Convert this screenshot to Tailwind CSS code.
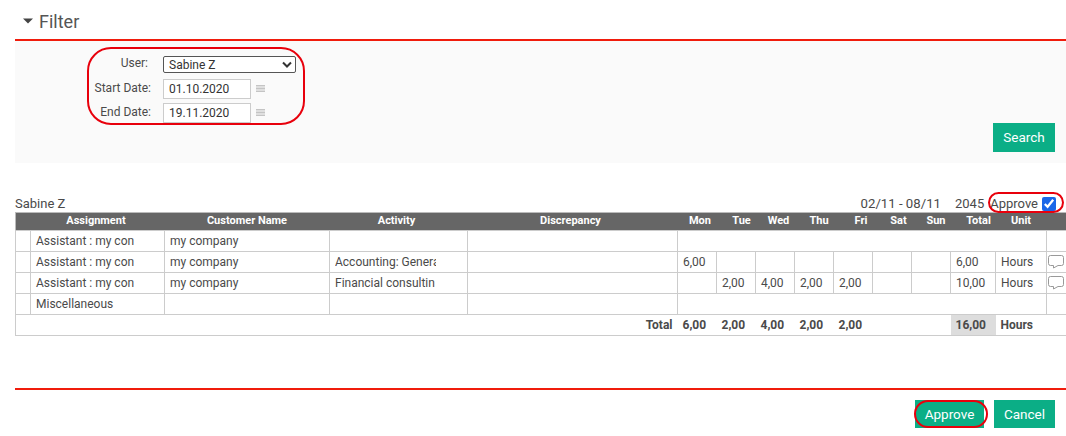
<!DOCTYPE html>
<html>
<head>
<meta charset="utf-8">
<script src="https://cdn.jsdelivr.net/npm/@tailwindcss/browser@4"></script>
</head>
<body class="bg-white font-['Roboto',sans-serif] text-[12px] text-[#4a4a4a] overflow-hidden">
<div class="relative w-[1066px] h-[436px] overflow-hidden">
  <div class="ml-[15px]">
    <div class="h-[41px] border-b-2 border-[#f01c0c] flex items-center gap-[6px] pl-[8px] pt-[3px]">
      <svg width="10" height="6" viewBox="0 0 10 6"><path d="M0 0.5H10L5 5.5Z" fill="#444"/></svg>
      <span class="text-[18px] text-[#555]">Filter</span>
    </div>
    <div class="h-[122px] bg-[#fafafa] flex justify-between items-end pr-[11px] pb-[11px]">
      <div class="self-start pt-[15px] grid grid-cols-[133px_auto] gap-x-[15px] content-start">
        <div class="h-[17px] flex items-center justify-end pb-[3px]">User:</div>
        <div class="w-[133px] h-[17px] border border-[#555] rounded-[2px] bg-white flex items-center justify-between pl-[5px] pr-[3px] text-[#333]">
          <span class="pt-[1px]">Sabine Z</span>
          <svg width="10" height="7" viewBox="0 0 10 7"><path d="M1 1.500L5 5.500L9 1.500" fill="none" stroke="#333" stroke-width="2"/></svg>
        </div>
        <div class="h-[20px] mt-[6px] flex items-center justify-end mr-[-3px] pb-[2px]">Start Date:</div>
        <div class="mt-[6px] flex items-center gap-[5px]">
          <div class="w-[88px] h-[20px] border border-[#ccc] bg-white flex items-center pl-[5px] text-[#333]">01.10.2020</div>
          <svg width="9" height="8" viewBox="0 0 9 8"><path d="M0 .5H9M0 2H9M0 3.500H9M0 5H9M0 6.500H9" stroke="#c4c4c4" stroke-width="1"/></svg>
        </div>
        <div class="h-[20px] mt-[4px] flex items-center justify-end mr-[-3px] pb-[2px]">End Date:</div>
        <div class="mt-[4px] flex items-center gap-[5px]">
          <div class="w-[88px] h-[20px] border border-[#ccc] bg-white flex items-center pl-[5px] text-[#333]">19.11.2020</div>
          <svg width="9" height="8" viewBox="0 0 9 8"><path d="M0 .5H9M0 2H9M0 3.500H9M0 5H9M0 6.500H9" stroke="#c4c4c4" stroke-width="1"/></svg>
        </div>
      </div>
      <button class="w-[62px] h-[29px] bg-[#0bae86] text-white text-[13.5px]">Search</button>
    </div>

    <div class="h-[49px] flex justify-between items-end text-[13px] leading-[18px]">
      <span class="translate-y-[1px]">Sabine Z</span>
      <div class="flex items-center translate-y-[1px]">
        <span class="text-[13.2px]">02/11 - 08/11</span>
        <span class="ml-[14px]">2045</span>
        <span class="ml-[6px]">Approve</span>
        <input type="checkbox" checked class="ml-[4px] mr-[10px] w-[14px] h-[14px] accent-[#1a66e8]">
      </div>
    </div>

    <table class="table-fixed border-collapse w-[1051px]">
      <colgroup>
        <col class="w-[15px]"><col class="w-[134px]"><col class="w-[165px]"><col class="w-[138px]"><col class="w-[210px]">
        <col class="w-[39px]"><col class="w-[39px]"><col class="w-[39px]"><col class="w-[39px]"><col class="w-[39px]"><col class="w-[39px]"><col class="w-[39px]"><col class="w-[45px]"><col class="w-[51px]"><col class="w-[20px]">
      </colgroup>
      <thead>
        <tr class="h-[18px] bg-[#666] text-white text-[11px] font-bold border border-[#bbb]">
          <th></th><th class="pr-[3px]">Assignment</th><th>Customer Name</th><th class="pr-[4px]">Activity</th><th class="pr-[4px]">Discrepancy</th>
          <th class="pl-[6px]">Mon</th><th class="pl-[11px]">Tue</th><th class="pl-[7px]">Wed</th><th class="pl-[10px]">Thu</th><th class="pl-[16px]">Fri</th><th class="pl-[13px]">Sat</th><th class="pl-[10px]">Sun</th><th class="pl-[11px]">Total</th><th>Unit</th><th></th>
        </tr>
      </thead>
      <tbody class="[&_td]:border [&_td]:border-[#ccc] [&_td]:px-[5px] [&_td]:py-0 [&_td]:overflow-hidden [&_td]:whitespace-nowrap">
        <tr class="h-[21px]">
          <td></td><td>Assistant : my con</td><td>my company</td><td></td><td></td><td colspan="9"></td><td></td>
        </tr>
        <tr class="h-[21px]">
          <td></td><td>Assistant : my con</td><td>my company</td><td><div class="w-[101px] overflow-hidden">Accounting: General</div></td><td></td>
          <td>6,00</td><td></td><td></td><td></td><td></td><td></td><td></td><td>6,00</td><td>Hours</td>
          <td class="!p-0"><svg class="ml-[1px]" width="16" height="14" viewBox="0 0 16 14"><path d="M2.500 .5H13.500Q15.500 .5 15.500 2.500V8.500Q15.500 10.500 13.500 10.500H10L5.500 13V10.500H2.500Q.5 10.500 .5 8.500V2.500Q.5 .5 2.500 .5Z" fill="#fff" stroke="#999"/></svg></td>
        </tr>
        <tr class="h-[21px]">
          <td></td><td>Assistant : my con</td><td>my company</td><td>Financial consultin</td><td></td>
          <td></td><td>2,00</td><td>4,00</td><td>2,00</td><td>2,00</td><td></td><td></td><td>10,00</td><td>Hours</td>
          <td class="!p-0"><svg class="ml-[1px]" width="16" height="14" viewBox="0 0 16 14"><path d="M2.500 .5H13.500Q15.500 .5 15.500 2.500V8.500Q15.500 10.500 13.500 10.500H10L5.500 13V10.500H2.500Q.5 10.500 .5 8.500V2.500Q.5 .5 2.500 .5Z" fill="#fff" stroke="#999"/></svg></td>
        </tr>
        <tr class="h-[21px]">
          <td></td><td>Miscellaneous</td><td></td><td></td><td></td><td colspan="9"></td><td></td>
        </tr>
        <tr class="h-[21px] font-bold border border-[#ccc] [&>td]:!border-0">
          <td colspan="5" class="text-right">Total</td>
          <td>6,00</td><td>2,00</td><td>4,00</td><td>2,00</td><td>2,00</td><td></td><td></td>
          <td class="bg-[#ddd]">16,00</td><td colspan="2">Hours</td>
        </tr>
      </tbody>
    </table>

    <div class="mt-[52px] border-t-2 border-[#f01c0c] pt-[10px] pr-[11px] flex justify-end gap-[10px]">
      <button class="w-[69px] h-[28px] bg-[#0bae86] text-white text-[13.5px]">Approve</button>
      <button class="w-[61px] h-[28px] bg-[#0bae86] text-white text-[13.5px]">Cancel</button>
    </div>
  </div>

  <div class="absolute left-[87px] top-[47px] w-[218px] h-[78px] border-2 border-[#e8000c] rounded-[24px]"></div>
  <div class="absolute left-[988px] top-[192px] w-[76px] h-[21px] border-2 border-[#e8000c] rounded-full"></div>
  <div class="absolute left-[914px] top-[400px] w-[74px] h-[28px] border-2 border-[#e8000c] rounded-full"></div>
</div>
</body>
</html>
